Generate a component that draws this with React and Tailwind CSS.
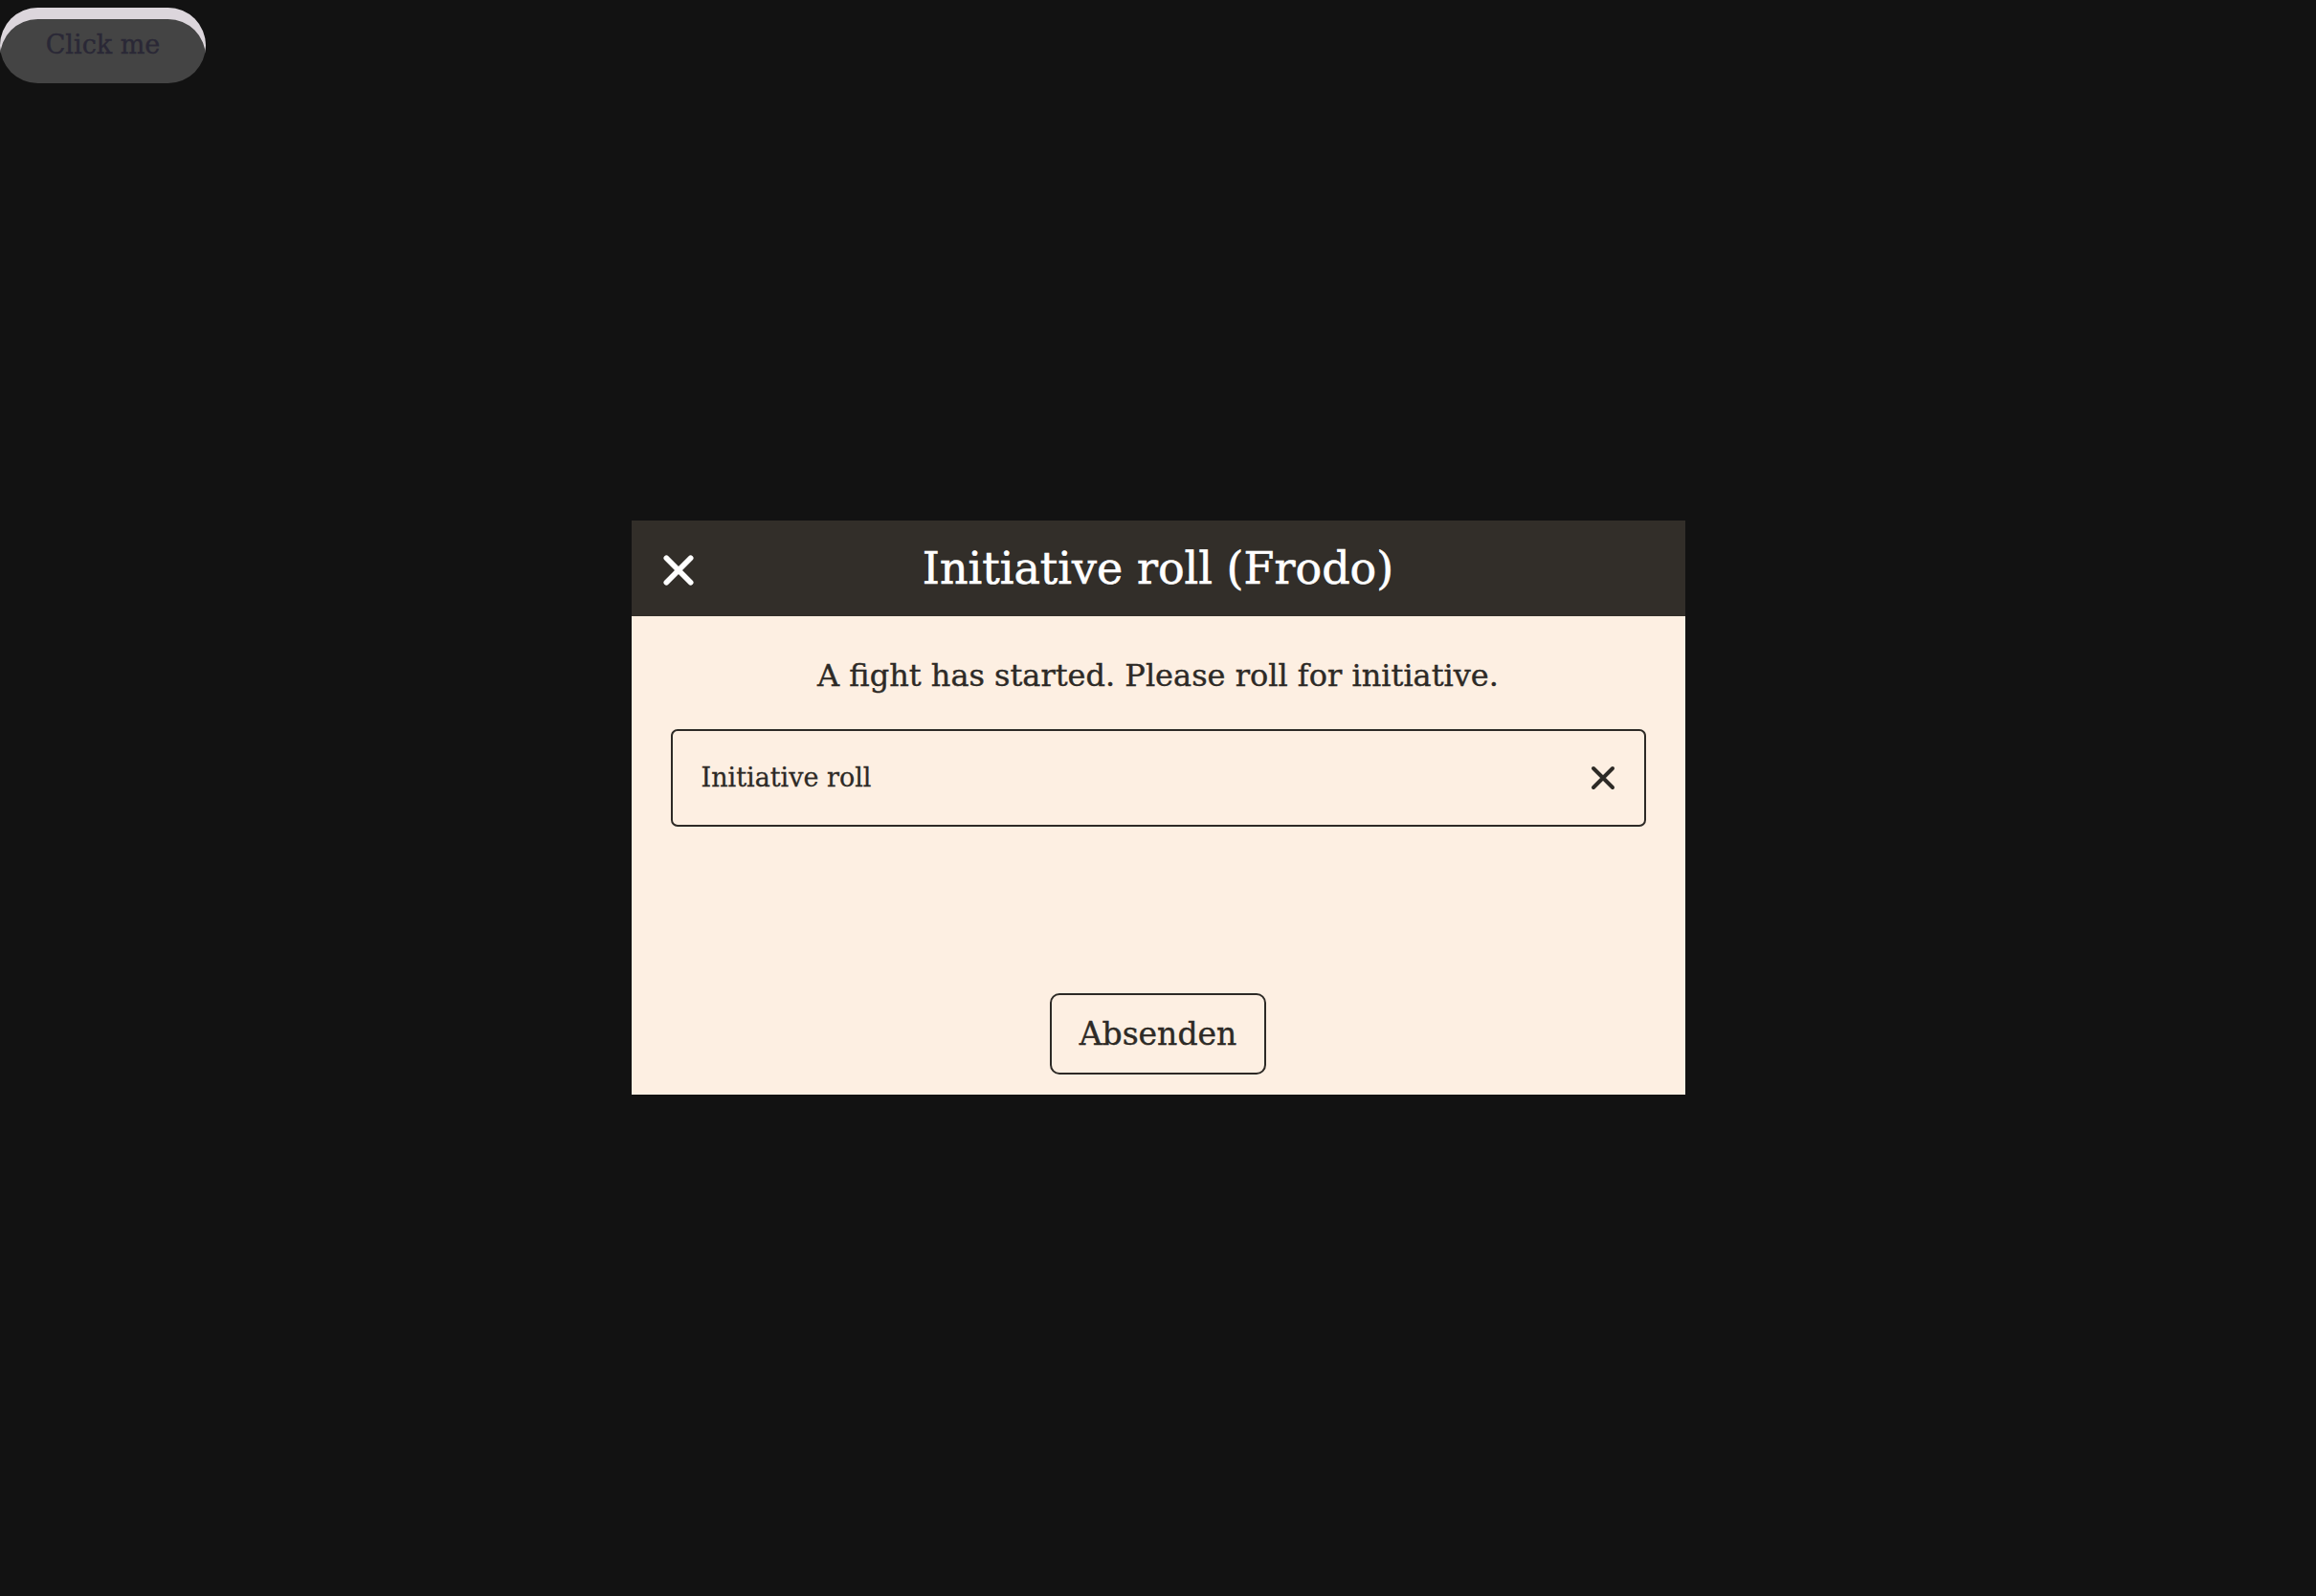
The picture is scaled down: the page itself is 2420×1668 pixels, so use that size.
import React, { useState } from 'react';

const serif = { fontFamily: '"DejaVu Serif", "Liberation Serif", serif' };

const XIcon = ({ className, width = 3.4 }) => (
  <svg viewBox="0 0 24 24" className={className} fill="none" stroke="currentColor" strokeWidth={width} strokeLinecap="round">
    <path d="M4 4 L20 20 M20 4 L4 20" />
  </svg>
);

const App = () => {
  const [roll, setRoll] = useState('');

  return (
    <div className="min-h-screen w-full bg-[#121212]" style={serif}>
      <button className="absolute left-0 top-[8px] h-[79px] w-[215px] rounded-full bg-[#444444] shadow-[inset_0_12px_0_#dcd6dc] text-[27px] text-[#2a2836] [-webkit-text-stroke:0.4px_currentColor]">
        Click me
      </button>

      {/* Dialog */}
      <div className="fixed inset-0 flex items-center justify-center pt-[20px]">
        <div className="flex h-[600px] w-[1101px] flex-col bg-[#fdefe2]">
          <div className="relative flex h-[100px] items-center justify-center bg-[#322e29]">
            <button className="absolute left-[30px] top-[33px] text-white">
              <XIcon className="h-[38px] w-[38px]" width={3.6} />
            </button>
            <h1 className="text-[46px] text-white [-webkit-text-stroke:0.6px_currentColor]">Initiative roll (Frodo)</h1>
          </div>

          <div className="flex flex-1 flex-col px-[41px] pb-[21px] pt-[42px] text-[#2d2a26]">
            <p className="text-center text-[32px] leading-[40px] [-webkit-text-stroke:0.4px_currentColor]">
              A fight has started. Please roll for initiative.
            </p>

            <div className="mt-[36px] flex h-[102px] items-center rounded-[7px] border-2 border-[#2d2a26] pl-[30px] pr-[28px]">
              <input
                value={roll}
                onChange={(e) => setRoll(e.target.value)}
                placeholder="Initiative roll"
                className="flex-1 bg-transparent text-[27px] text-[#2d2a26] outline-none placeholder:text-[#2d2a26] [-webkit-text-stroke:0.3px_currentColor]"
                style={serif}
              />
              <button onClick={() => setRoll('')} className="text-[#2d2a26]">
                <XIcon className="h-[30px] w-[30px]" width={3.2} />
              </button>
            </div>

            <div className="flex-1" />

            <div className="flex justify-center">
              <button className="h-[85px] w-[226px] rounded-[10px] border-2 border-[#2d2a26] text-[33px] text-[#2d2a26] [-webkit-text-stroke:0.4px_currentColor]">
                Absenden
              </button>
            </div>
          </div>
        </div>
      </div>
    </div>
  );
};

export default App;
